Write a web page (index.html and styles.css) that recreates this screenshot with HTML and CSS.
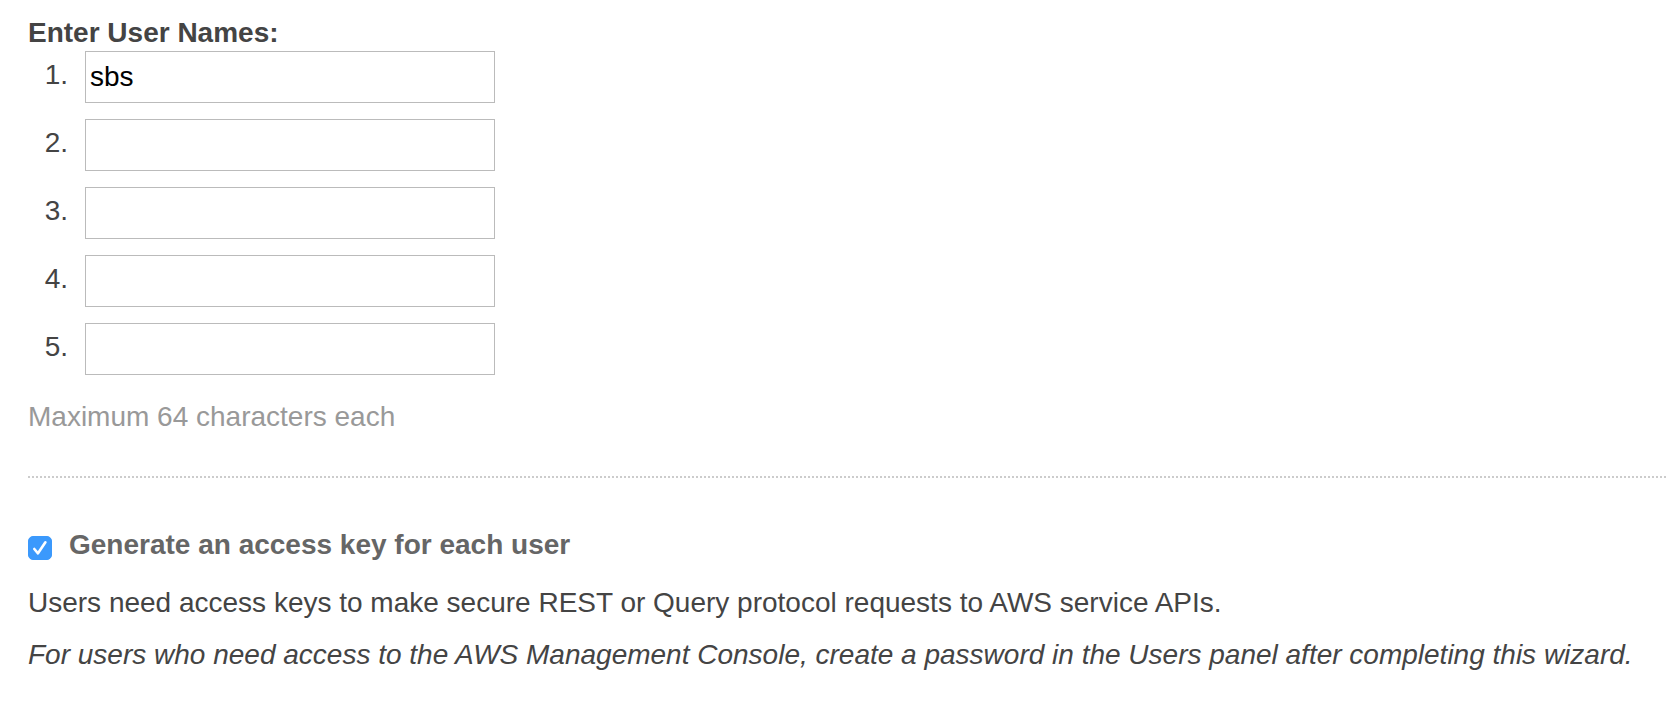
FILE: index.html
```html
<!DOCTYPE html>
<html lang="en">
<head>
<meta charset="utf-8">
<title>Create Users</title>
<link rel="stylesheet" href="styles.css">
</head>
<body>
<form class="wizard">
  <section class="names">
    <h1 class="title" id="names-title">Enter User Names:</h1>
    <div class="name-list" role="group" aria-labelledby="names-title">
      <div class="name-row"><label class="number" for="user1">1.</label><input class="name-input" id="user1" type="text" maxlength="64" value="sbs"></div>
      <div class="name-row"><label class="number" for="user2">2.</label><input class="name-input" id="user2" type="text" maxlength="64"></div>
      <div class="name-row"><label class="number" for="user3">3.</label><input class="name-input" id="user3" type="text" maxlength="64"></div>
      <div class="name-row"><label class="number" for="user4">4.</label><input class="name-input" id="user4" type="text" maxlength="64"></div>
      <div class="name-row"><label class="number" for="user5">5.</label><input class="name-input" id="user5" type="text" maxlength="64"></div>
    </div>
    <p class="hint">Maximum 64 characters each</p>
  </section>
  <div class="divider"></div>
  <section class="keys">
    <div class="option">
      <span class="check">
        <input class="check-input" id="generate" type="checkbox" checked>
        <svg class="check-mark" viewBox="0 0 24 24" aria-hidden="true"><path d="M6.3 13 10 17.3 17.4 6.3" fill="none" stroke="#fff" stroke-width="2.6" stroke-linecap="round" stroke-linejoin="round"/></svg>
      </span>
      <label class="option-label" for="generate">Generate an access key for each user</label>
    </div>
    <p class="text">Users need access keys to make secure REST or Query protocol requests to AWS service APIs.</p>
    <p class="text note">For users who need access to the AWS Management Console, create a password in the Users panel after completing this wizard.</p>
  </section>
</form>
</body>
</html>
```
FILE: styles.css
```css
* {
  box-sizing: border-box;
}

body {
  margin: 0;
  background: #fff;
  color: #444;
  font: 28px/36px "Liberation Sans", Arial, sans-serif;
}

.wizard {
  padding: 15px 0 32px 28px;
}

.title {
  margin: 0;
  font-size: 28px;
  font-weight: bold;
}

.name-list {
  display: flex;
  flex-direction: column;
  gap: 16px;
}

.name-row {
  display: flex;
  align-items: flex-start;
  gap: 17px;
}

.number {
  width: 40px;
  padding-top: 6px;
  text-align: right;
}

.name-input {
  width: 410px;
  height: 52px;
  padding: 0 4px;
  border: 1px solid #bbb;
  border-radius: 0;
  background: #fff;
  color: #000;
  font: inherit;
  outline: none;
}

.hint {
  margin: 24px 0 41px;
  color: #999;
}

.divider {
  height: 2px;
  background: repeating-linear-gradient(to right, #ccc 0 2px, transparent 2px 4px);
}

.keys {
  padding-top: 49px;
}

.option {
  display: flex;
  align-items: flex-start;
  gap: 17px;
}

.check {
  display: grid;
  margin-top: 9px;
}

.check-input,
.check-mark {
  grid-area: 1 / 1;
  width: 24px;
  height: 24px;
}

.check-input {
  appearance: none;
  margin: 0;
  border-radius: 5px;
  border: 1px solid #3b99fc;
  background: #fff;
}

.check-input:checked {
  background: #3b99fc;
}

.check-mark {
  visibility: hidden;
  pointer-events: none;
}

.check-input:checked + .check-mark {
  visibility: visible;
}

.option-label {
  color: #666;
  font-weight: bold;
}

.text {
  margin: 22px 0 0;
}

.note {
  margin-top: 16px;
  font-style: italic;
}
```
